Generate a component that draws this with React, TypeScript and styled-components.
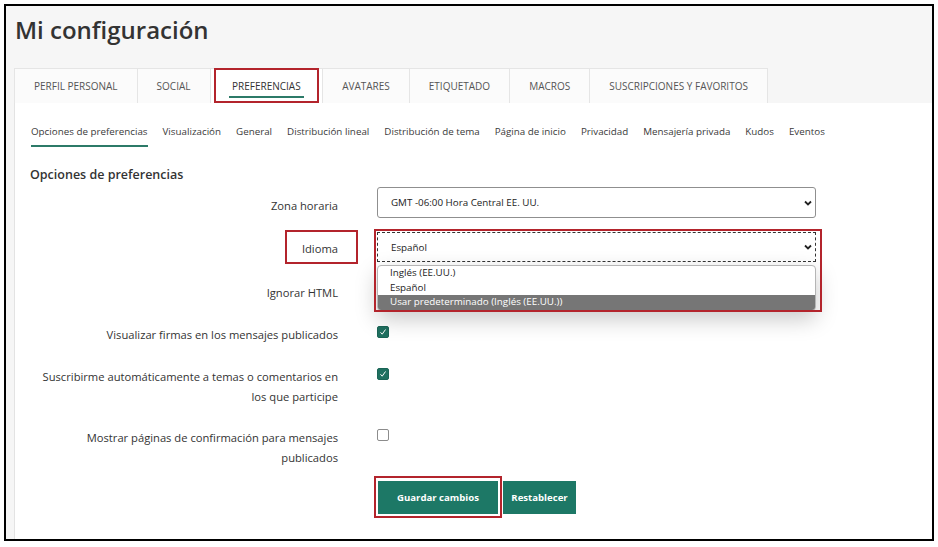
import styled, { createGlobalStyle } from "styled-components";

const GREEN = "#1d7866";
const RED = "#b3242c";

const GlobalStyle = createGlobalStyle`
  body {
    margin: 0;
    background: #fff;
    font-family: "Open Sans", "Noto Sans", sans-serif;
    color: #333;
  }
`;

const Page = styled.div`
  width: 938px;
  height: 547px;
  padding: 4px 4px 0 4px;
  box-sizing: border-box;
`;

const Frame = styled.div`
  height: 537px;
  border: 2px solid #000;
  background: #f6f6f6;
  box-sizing: border-box;
  display: flex;
  flex-direction: column;
  padding-left: 8px;
`;

const Title = styled.h1`
  margin: 0 0 20px;
  padding: 6px 0 0 1px;
  font-size: 24px;
  font-weight: 600;
  line-height: 36px;
  color: #333;
`;

const Marked = styled.span<{ $inset: string }>`
  position: relative;
  display: inline-block;
  &::after {
    content: "";
    position: absolute;
    inset: ${(p) => p.$inset};
    border: 2px solid ${RED};
    pointer-events: none;
    z-index: 5;
  }
`;

const Tabs = styled.div`
  display: flex;
  margin-left: 1px;
  height: 35px;
`;

const Tab = styled.div<{ $active?: boolean }>`
  position: relative;
  display: flex;
  align-items: flex-start;
  padding: 0 ${(p) => (p.$active ? "21.5px" : "19px")};
  margin-left: -1px;
  background: ${(p) => (p.$active ? "#fff" : "#fbfbfb")};
  border: 1px solid #e5e5e5;
  border-bottom: none;
  font-size: 10px;
  line-height: 14px;
  text-transform: uppercase;
  color: ${(p) => (p.$active ? "#333" : "#555")};
  span {
    padding: 10px 3px 3px;
    margin: 0 -3px;
    border-bottom: 2px solid ${(p) => (p.$active ? "#2c7a68" : "transparent")};
  }
  ${(p) =>
    p.$active &&
    `&::after {
      content: "";
      position: absolute;
      inset: -1px 3px 0 3px;
      border: 2px solid ${RED};
    }`}
`;

const Panel = styled.div`
  flex: 1;
  background: #fff;
  border-left: 1px solid #e3e3e3;
  padding-left: 15px;
`;

const SubTabs = styled.div`
  display: flex;
  gap: 15px;
  padding-left: 1px;
`;

const SubTab = styled.div<{ $active?: boolean }>`
  padding: 21px 0 5px;
  font-size: 9.8px;
  line-height: 16px;
  color: #3a3a3a;
  border-bottom: 2px solid ${(p) => (p.$active ? "#2c7a68" : "transparent")};
`;

const Heading = styled.h2`
  margin: 18px 0 2px;
  font-size: 12.5px;
  font-weight: 600;
  line-height: 20px;
  color: #333;
`;

const Row = styled.div<{ $mt: number }>`
  display: grid;
  grid-template-columns: 308px 439px;
  column-gap: 39px;
  align-items: start;
  margin-top: ${(p) => p.$mt}px;
`;

const Label = styled.div<{ $pt?: number }>`
  text-align: right;
  font-size: 11.2px;
  line-height: 20px;
  color: #333;
  padding-top: ${(p) => p.$pt ?? 0}px;
`;

const SelectBox = styled.div<{ $h: number; $focus?: boolean }>`
  position: relative;
  height: ${(p) => p.$h}px;
  box-sizing: border-box;
  display: flex;
  align-items: center;
  justify-content: space-between;
  padding: 0 3px 0 13px;
  border: 1px ${(p) => (p.$focus ? "dashed #333" : "solid #8f8f8f")};
  border-radius: ${(p) => (p.$focus ? "0" : "3px")};
  background: #fff;
  font-size: 9.8px;
  color: #222;
`;

const SelectWrap = styled.div`
  position: relative;
  &::after {
    content: "";
    position: absolute;
    inset: -3px -6px -50px -3px;
    border: 2px solid ${RED};
    pointer-events: none;
    z-index: 5;
  }
`;

const Dropdown = styled.div`
  position: absolute;
  top: calc(100% + 3px);
  left: 0;
  width: 100%;
  box-sizing: border-box;
  background: #fff;
  border: 1px solid #b5b5b5;
  border-radius: 4px;
  box-shadow: 0 8px 22px rgba(0, 0, 0, 0.22);
  overflow: hidden;
  z-index: 3;
`;

const Option = styled.div<{ $selected?: boolean }>`
  padding-left: 12px;
  font-size: 9.8px;
  line-height: 14.5px;
  background: ${(p) => (p.$selected ? "#767676" : "transparent")};
  color: ${(p) => (p.$selected ? "#fff" : "#222")};
`;

const Check = styled.div<{ $checked?: boolean }>`
  width: 12px;
  height: 12px;
  margin-top: 1px;
  box-sizing: border-box;
  border-radius: 2px;
  border: 1px solid ${(p) => (p.$checked ? "#1a6556" : "#8c8c8c")};
  background: ${(p) => (p.$checked ? "#1f7060" : "#fff")};
  display: flex;
  align-items: center;
  justify-content: center;
`;

const Buttons = styled.div`
  display: flex;
  gap: 5px;
  margin-left: 1px;
`;

const Button = styled.button<{ $w: number }>`
  width: ${(p) => p.$w}px;
  height: 33px;
  border: none;
  padding: 0;
  background: ${GREEN};
  color: #fff;
  font-family: inherit;
  font-size: 9.6px;
  font-weight: 700;
`;

const Chevron = () => (
  <svg width="8" height="6" viewBox="0 0 8 6">
    <path d="M1 1.5 L4 4.5 L7 1.5" fill="none" stroke="#222" strokeWidth="1.8" />
  </svg>
);

const Tick = () => (
  <svg width="8" height="8" viewBox="0 0 8 8">
    <path d="M1.5 4.3 L3.2 6.2 L6.5 1.5" fill="none" stroke="#fff" strokeWidth="1" />
  </svg>
);

const tabs = [
  "Perfil personal",
  "Social",
  "Preferencias",
  "Avatares",
  "Etiquetado",
  "Macros",
  "Suscripciones y favoritos",
];

const subTabs = [
  "Opciones de preferencias",
  "Visualización",
  "General",
  "Distribución lineal",
  "Distribución de tema",
  "Página de inicio",
  "Privacidad",
  "Mensajería privada",
  "Kudos",
  "Eventos",
];

export default function App() {
  return (
    <>
      <GlobalStyle />
      <Page>
        <Frame>
          <Title>Mi configuración</Title>
          <Tabs>
            {tabs.map((t) => (
              <Tab key={t} $active={t === "Preferencias"}>
                <span>{t}</span>
              </Tab>
            ))}
          </Tabs>
          <Panel>
            <SubTabs>
              {subTabs.map((t, i) => (
                <SubTab key={t} $active={i === 0}>
                  {t}
                </SubTab>
              ))}
            </SubTabs>
            <Heading>Opciones de preferencias</Heading>

            <Row $mt={0}>
              <Label $pt={9}>Zona horaria</Label>
              <SelectBox $h={31}>
                GMT -06:00 Hora Central EE. UU.
                <Chevron />
              </SelectBox>
            </Row>

            <Row $mt={14}>
              <Label $pt={7}>
                <Marked $inset="-9px -20px -5px -17px">Idioma</Marked>
              </Label>
              <SelectWrap>
                <SelectBox $h={30} $focus>
                  Español
                  <Chevron />
                </SelectBox>
                <Dropdown>
                  <Option>Inglés (EE.UU.)</Option>
                  <Option>Español</Option>
                  <Option $selected>Usar predeterminado (Inglés (EE.UU.))</Option>
                </Dropdown>
              </SelectWrap>
            </Row>

            <Row $mt={21}>
              <Label>Ignorar HTML</Label>
              <Check />
            </Row>

            <Row $mt={22}>
              <Label>Visualizar firmas en los mensajes publicados</Label>
              <Check $checked>
                <Tick />
              </Check>
            </Row>

            <Row $mt={22}>
              <Label>
                Suscribirme automáticamente a temas o comentarios en los que participe
              </Label>
              <Check $checked>
                <Tick />
              </Check>
            </Row>

            <Row $mt={21}>
              <Label>Mostrar páginas de confirmación para mensajes publicados</Label>
              <Check />
            </Row>

            <Row $mt={13}>
              <div />
              <Buttons>
                <Marked $inset="-5px -4px -4px -4px">
                  <Button $w={120}>Guardar cambios</Button>
                </Marked>
                <Button $w={73}>Restablecer</Button>
              </Buttons>
            </Row>
          </Panel>
        </Frame>
      </Page>
    </>
  );
}
